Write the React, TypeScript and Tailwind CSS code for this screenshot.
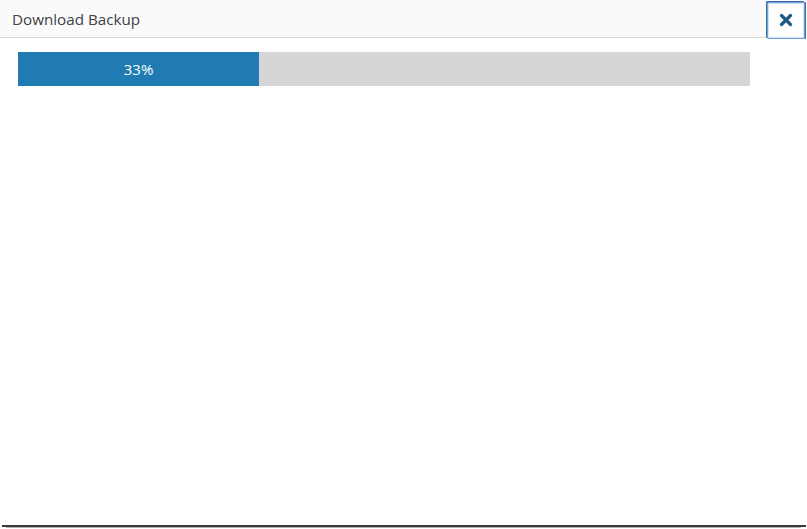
import React from 'react';

const App: React.FC = () => {
  const progress = 33;

  return (
    <div className="w-[807px] h-[529px] bg-white font-['Open_Sans',sans-serif]">
      <div className="h-[527px] flex flex-col border-b-2 border-[#3a3a3a] ml-[2px] mr-[1px]">
        {/* Header */}
        <div className="h-[38px] -ml-[2px] flex items-center justify-between bg-[#fafafa] border-b border-[#dcdcdc]">
          <h2 className="pl-3 pt-[3px] text-[15.2px] font-medium text-[#3f3f46] leading-none">Download Backup</h2>
          <button
            type="button"
            className="mt-[3px] mr-[1px] w-[38px] h-[37px] flex items-center justify-center bg-white border border-[#6aa3d9] shadow-[inset_0_0_0_1px_#cfe2f5,-1px_-1px_0_#3d6f9c,1px_0_0_#3d6f9c] rounded-[1px]"
            title="Close"
          >
            <svg width="14" height="14" viewBox="0 0 14 14">
              <path d="M2.5 2.5 L11.5 11.5 M11.5 2.5 L2.5 11.5" stroke="#1f5b87" strokeWidth="3.2" strokeLinecap="round" />
            </svg>
          </button>
        </div>

        {/* Progress */}
        <div className="pt-[14px] pl-4">
          <div className="w-[732px] h-[34px] bg-[#d6d6d6] flex">
            <div
              className="w-[241px] h-full bg-[#1f7bb2] flex items-center justify-center text-white text-[15px]"
            >
              {progress}%
            </div>
          </div>
        </div>
      </div>
      <div className="h-[1px] mx-[6px] bg-[#b0b0b0]" />
    </div>
  );
};

export default App;
